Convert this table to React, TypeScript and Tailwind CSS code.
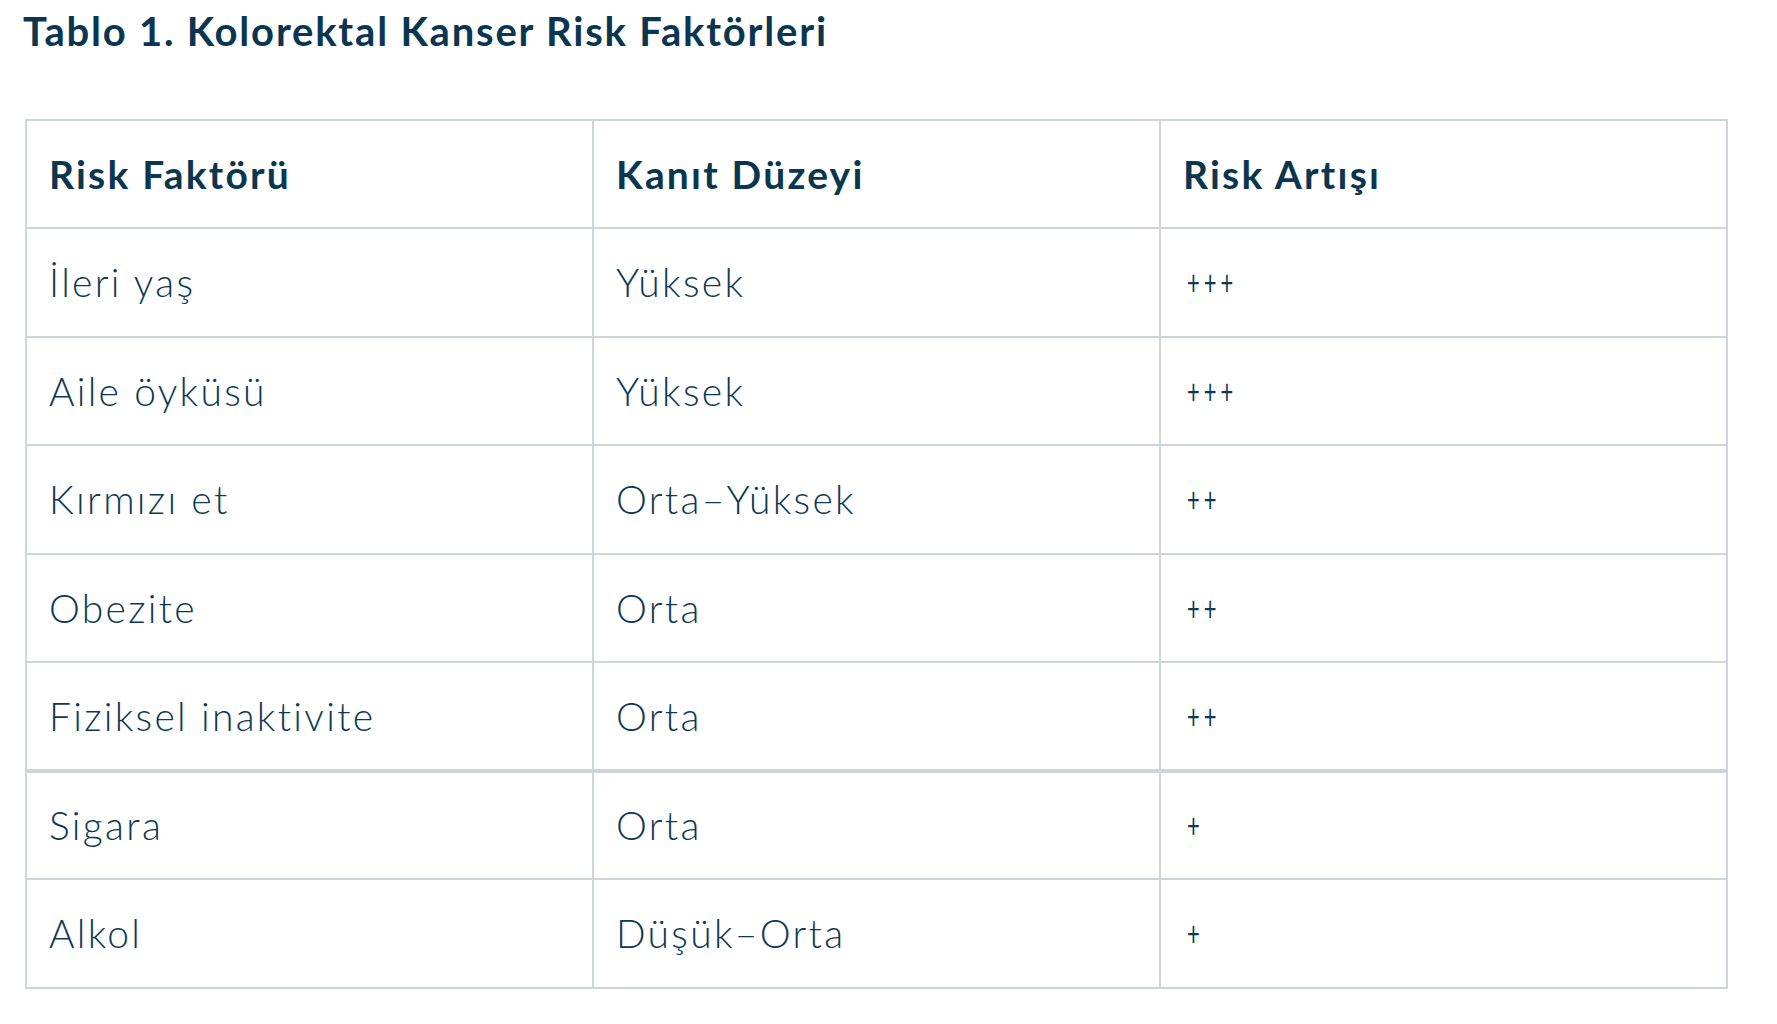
import React from "react";

const rows: [string, string, string][] = [
  ["İleri yaş", "Yüksek", "+++"],
  ["Aile öyküsü", "Yüksek", "+++"],
  ["Kırmızı et", "Orta–Yüksek", "++"],
  ["Obezite", "Orta", "++"],
  ["Fiziksel inaktivite", "Orta", "++"],
  ["Sigara", "Orta", "+"],
  ["Alkol", "Düşük–Orta", "+"],
];

export default function App() {
  return (
    <div
      className="min-h-screen bg-white text-[#0d3a53]"
      style={{ fontFamily: "Lato, 'Open Sans', sans-serif" }}
    >
      <div className="pl-[23px] pt-[7px]">
        <h1 className="text-[40px] leading-[48px] font-bold tracking-[1.8px] text-[#0b3650]">
          Tablo 1. Kolorektal Kanser Risk Faktörleri
        </h1>
      </div>
      <div className="pl-[25px] pt-[64px]">
        <table className="w-[1703px] border-collapse table-fixed">
          <thead>
            <tr>
              <th className="h-[108px] border-2 border-[#cdd5db] pl-[22px] text-left text-[39px] font-bold tracking-[2.2px] text-[#0b3650]">
                Risk Faktörü
              </th>
              <th className="h-[108px] border-2 border-[#cdd5db] pl-[22px] text-left text-[39px] font-bold tracking-[2.2px] text-[#0b3650]">
                Kanıt Düzeyi
              </th>
              <th className="h-[108px] border-2 border-[#cdd5db] pl-[22px] text-left text-[39px] font-bold tracking-[2.2px] text-[#0b3650]">
                Risk Artışı
              </th>
            </tr>
          </thead>
          <tbody>
            {rows.map((r, i) => {
              const thick = i === 5;
              const cell = thick
                ? "h-[108.5px] border-2 border-t-4 border-[#cdd5db] pl-[22px] text-left text-[39px] font-light tracking-[2.3px]"
                : "h-[108.5px] border-2 border-[#cdd5db] pl-[22px] text-left text-[39px] font-light tracking-[2.3px]";
              const plusCell = thick
                ? "h-[108.5px] border-2 border-t-4 border-[#cdd5db] pl-[26px] text-left text-[22px] leading-none"
                : "h-[108.5px] border-2 border-[#cdd5db] pl-[26px] text-left text-[22px] leading-none";
              return (
                <tr key={i}>
                  <td className={cell}>{r[0]}</td>
                  <td className={cell}>{r[1]}</td>
                  <td className={plusCell}>
                    <span className="inline-block scale-y-[1.6] tracking-[4px] font-normal leading-none">
                      {r[2]}
                    </span>
                  </td>
                </tr>
              );
            })}
          </tbody>
        </table>
      </div>
    </div>
  );
}
